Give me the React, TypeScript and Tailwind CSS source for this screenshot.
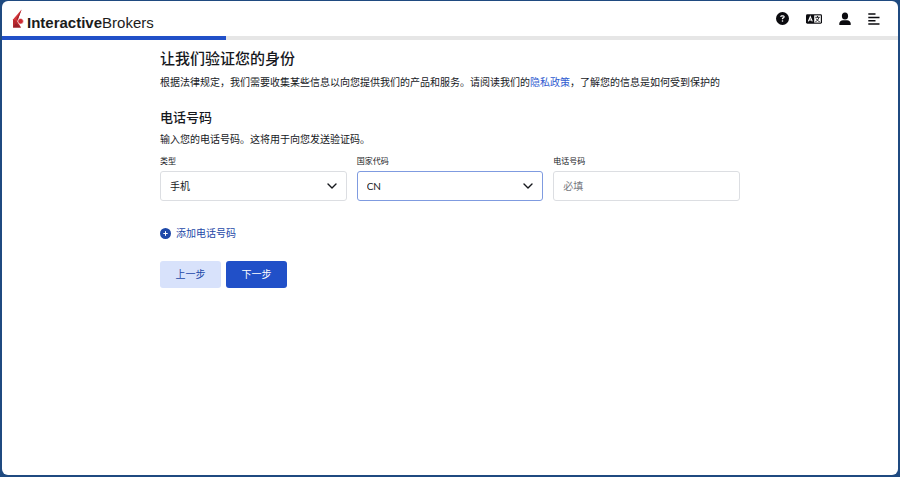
import React from 'react';
import { FaCircleQuestion, FaCirclePlus } from 'react-icons/fa6';

function Logo() {
  return (
    <a href="#home" className="flex items-end gap-[3px] text-[15px] leading-3 text-[#1c1c1c]">
      <svg viewBox="0 0 12 20" className="h-5 w-3" aria-hidden="true">
        <path d="M9.6 0.4 L1 10.4 V18.6 L5.6 11.6 Z" fill="#d5363b" />
        <path d="M1 10.4 V18.6 H9 L5.4 12.2 Z" fill="#b9282f" />
        <path d="M9.6 0.4 L4.6 9.4 L5.4 12.4 L7 7.4 Z" fill="#a3222a" />
        <path d="M1 18.6 L3.8 14.2 L9 18.6 Z" fill="#98202a" />
        <circle cx="8.6" cy="12.2" r="2.8" fill="#cf2a32" stroke="#fff" strokeWidth="0.6" />
      </svg>
      <span className="font-['Liberation_Sans',sans-serif]">
        <b className="font-bold">Interactive</b>Brokers
      </span>
    </a>
  );
}

function LanguageIcon() {
  return (
    <svg viewBox="0 0 16 10" className="h-[10px] w-4" fill="none" aria-hidden="true">
      <rect x="0" y="0.3" width="16" height="9.4" rx="1.4" fill="#0b0b0f" />
      <rect x="8.2" y="1.4" width="6.6" height="7.2" fill="#fff" />
      <path d="M2.3 7.4 L4.3 2.7 L6.3 7.4 M3 6 H5.6" stroke="#fff" strokeWidth="1.1" />
      <path
        d="M9.3 3.3 H13.7 M11.5 2 V3.3 M12.9 3.5 C12.3 5.6 11 7 9.4 7.7 M10.2 4.6 C10.9 6.2 12.1 7.1 13.7 7.7"
        stroke="#0b0b0f"
        strokeWidth="0.9"
      />
    </svg>
  );
}

function UserIcon() {
  return (
    <svg viewBox="0 0 12 14" className="h-[14px] w-3" fill="#0b0b0f" aria-hidden="true">
      <ellipse cx="6" cy="4" rx="3.1" ry="3.5" />
      <path d="M0.3 13 V11.6 C0.3 9.6 2 8.5 4 8.3 H8 C10 8.5 11.7 9.6 11.7 11.6 V13 Z" />
    </svg>
  );
}

function MenuIcon() {
  return (
    <svg viewBox="0 0 12 12" className="size-3" stroke="#0b0b0f" strokeWidth="1.5" aria-hidden="true">
      <path d="M0.3 1.1 H7.5 M0.3 4.4 H11.5 M0.3 7.7 H7.5 M0.3 11 H11.5" />
    </svg>
  );
}

function Chevron() {
  return (
    <svg
      viewBox="0 0 10 6"
      className="pointer-events-none absolute top-3 right-[10px] h-[6px] w-[10px]"
      fill="none"
      stroke="#16181d"
      strokeWidth="1.4"
      strokeLinecap="round"
      strokeLinejoin="round"
      aria-hidden="true"
    >
      <path d="M1 1 L5 5 L9 1" />
    </svg>
  );
}

type SelectFieldProps = {
  id: string;
  label: string;
  options: string[];
  active?: boolean;
};

function SelectField({ id, label, options, active }: SelectFieldProps) {
  return (
    <div>
      <label htmlFor={id} className="block text-[8px] leading-[10px]">
        {label}
      </label>
      <div className="relative mt-[5px]">
        <select
          id={id}
          className={`block h-[30px] w-full appearance-none rounded-[3px] border bg-white px-[9px] text-[10px] outline-none ${
            active ? 'border-[#7f9be0]' : 'border-[#dcdee2]'
          }`}
        >
          {options.map((o) => (
            <option key={o}>{o}</option>
          ))}
        </select>
        <Chevron />
      </div>
    </div>
  );
}

export default function App() {
  return (
    <div className="flex min-h-screen flex-col bg-[#1f4a80] px-[2px] pt-px pb-[2px] font-['Lato','Noto_Sans_CJK_SC',sans-serif] text-[#16181d]">
      <div className="flex-1 overflow-hidden rounded-md bg-white">
        <header className="flex h-[35px] items-center justify-between pr-[18px] pl-[10px]">
          <Logo />
          <nav className="flex items-center gap-[17px]">
            <button type="button" aria-label="帮助">
              <FaCircleQuestion className="size-[13px] text-[#0b0b0f]" />
            </button>
            <button type="button" aria-label="语言">
              <LanguageIcon />
            </button>
            <button type="button" aria-label="账户">
              <UserIcon />
            </button>
            <button type="button" aria-label="菜单">
              <MenuIcon />
            </button>
          </nav>
        </header>

        {/* Step progress */}
        <div className="h-1 bg-[#e6e6e6]">
          <div className="h-full w-1/4 bg-[#2150c8]" />
        </div>

        <main className="mx-auto max-w-[580px] pt-2">
          <h1 className="text-[15px] leading-5 font-medium">让我们验证您的身份</h1>
          <p className="mt-[6px] text-[10px] leading-4">
            根据法律规定，我们需要收集某些信息以向您提供我们的产品和服务。请阅读我们的
            <a href="#privacy" className="text-[#2f5bd0]">隐私政策</a>
            ，了解您的信息是如何受到保护的
          </p>

          <h2 className="mt-[18px] text-[13px] leading-[18px] font-medium">电话号码</h2>
          <p className="mt-[5px] text-[10px] leading-4">输入您的电话号码。这将用于向您发送验证码。</p>

          <form onSubmit={(e) => e.preventDefault()}>
            <div className="mt-[9px] grid grid-cols-3 gap-[10px]">
              <SelectField id="type" label="类型" options={['手机']} />
              <SelectField id="country" label="国家代码" options={['CN']} active />
              <div>
                <label htmlFor="phone" className="block text-[8px] leading-[10px]">
                  电话号码
                </label>
                <input
                  id="phone"
                  type="tel"
                  placeholder="必填"
                  className="mt-[5px] block h-[30px] w-full rounded-[3px] border border-[#dcdee2] px-[9px] text-[10px] outline-none placeholder:text-[#76797f]"
                />
              </div>
            </div>

            <button type="button" className="mt-6 flex items-center gap-[5px] text-[10px] leading-4 text-[#1d48a8]">
              <FaCirclePlus className="size-[11px]" />
              添加电话号码
            </button>

            <div className="mt-5 flex gap-[5px]">
              <button type="button" className="h-[27px] w-[61px] rounded-[3px] bg-[#d8e2fb] text-[10px] text-[#1d48a8]">
                上一步
              </button>
              <button type="submit" className="h-[27px] w-[61px] rounded-[3px] bg-[#2150c8] text-[10px] text-white">
                下一步
              </button>
            </div>
          </form>
        </main>
      </div>
    </div>
  );
}
